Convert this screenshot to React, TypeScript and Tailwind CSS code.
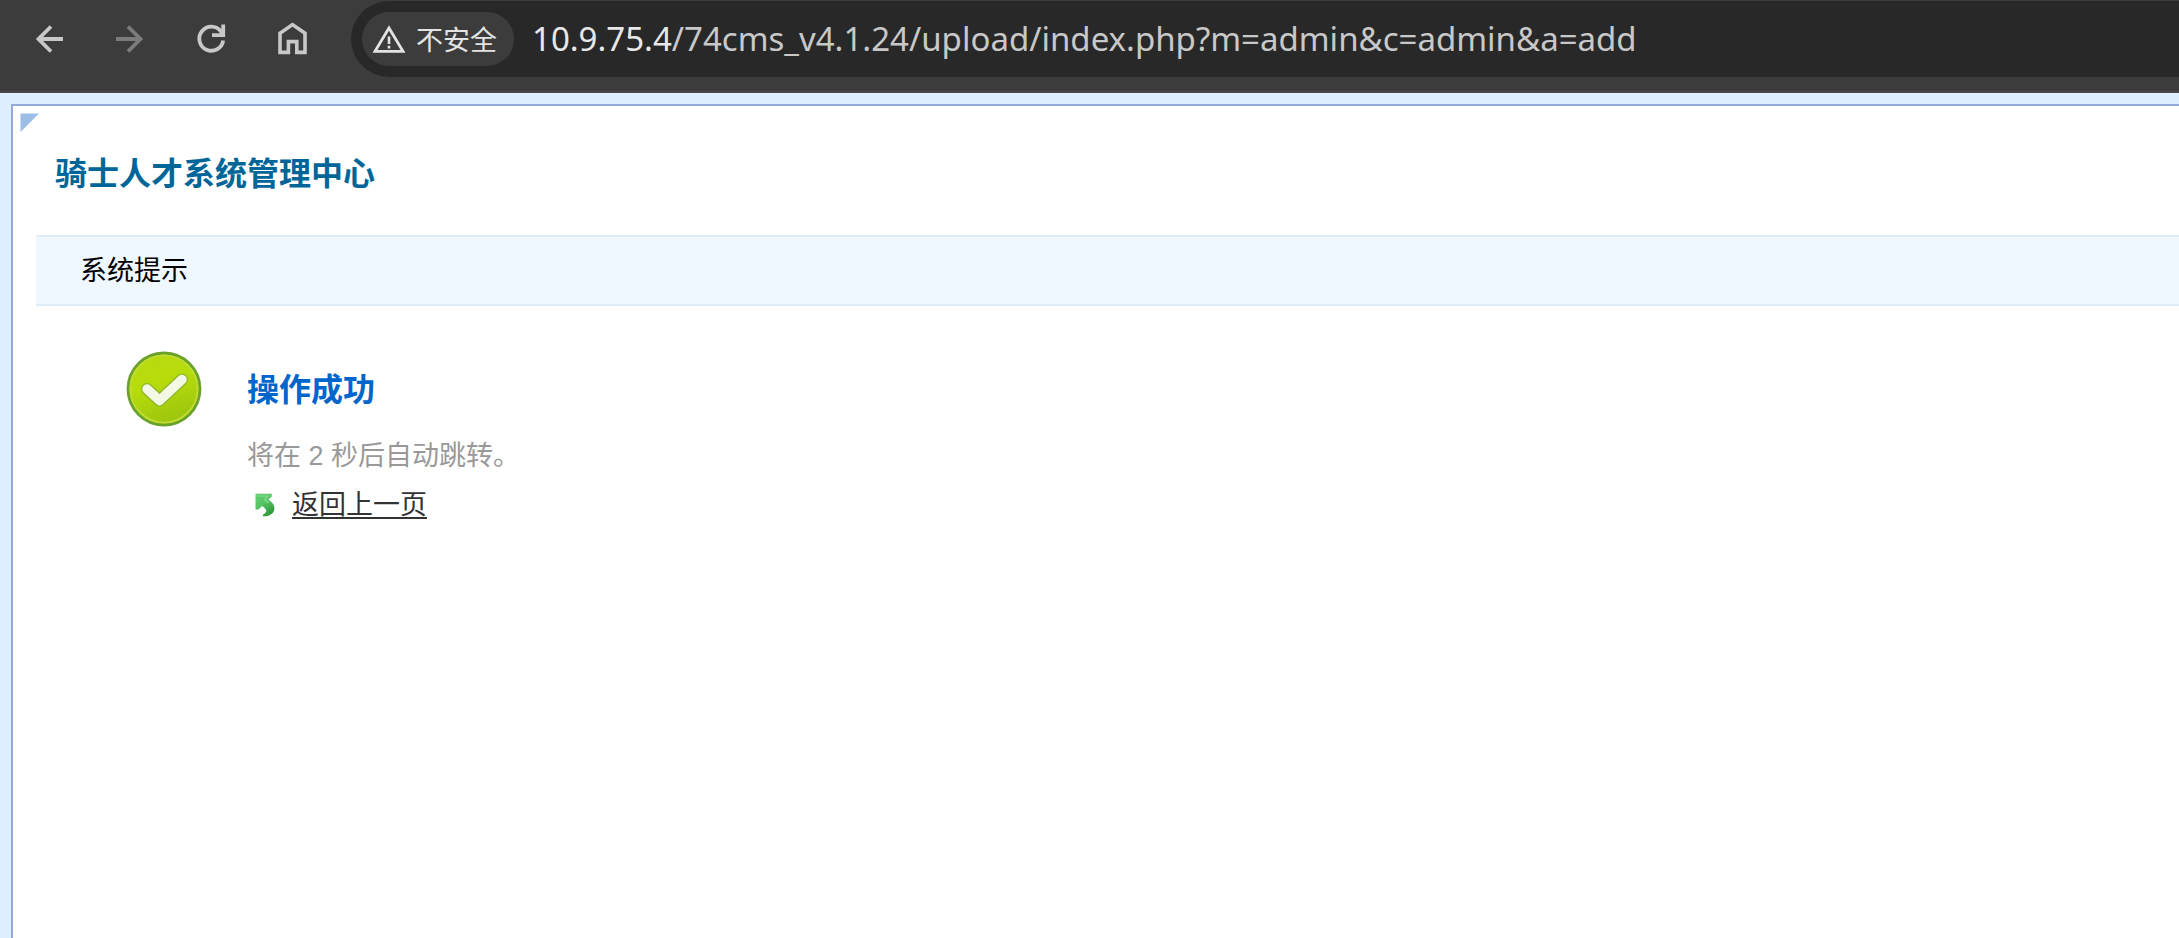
import React, { useState } from "react";

function BackIcon({ flipped = false }: { flipped?: boolean }) {
  return (
    <svg
      width="36"
      height="36"
      viewBox="0 0 36 36"
      fill="none"
      stroke="currentColor"
      strokeWidth="3.8"
      className={flipped ? "rotate-180" : ""}
      aria-hidden="true"
    >
      <path d="M32 18H7.5M20 5.5L7.5 18L20 30.5" />
    </svg>
  );
}

function ReloadIcon() {
  return (
    <svg width="36" height="36" viewBox="0 0 36 36" fill="none" stroke="currentColor" strokeWidth="3.8" aria-hidden="true">
      <path d="M30.2 19.5A12 12 0 1 1 28 10.6L30.5 14" />
      <path d="M30.2 3.5V14.2H19" />
    </svg>
  );
}

function HomeIcon() {
  return (
    <svg width="36" height="36" viewBox="0 0 36 36" fill="none" stroke="currentColor" strokeWidth="3.6" aria-hidden="true">
      <path d="M6 12.2L18.5 3.6L31 12.2V31.4H22.8V20.6H14.4V31.4H6Z" />
    </svg>
  );
}

function WarningIcon() {
  return (
    <svg width="34" height="30" viewBox="0 0 34 30" fill="none" stroke="currentColor" aria-hidden="true">
      <path d="M17 4L31 27.4H3Z" strokeWidth="2.8" />
      <path d="M17 12.5V20M17 21.8V24.4" strokeWidth="2.6" />
    </svg>
  );
}

function SuccessIcon() {
  return (
    <svg width="76" height="76" viewBox="0 0 76 76" className="shrink-0" role="img" aria-label="成功">
      <defs>
        <linearGradient id="disc" x1="0" y1="0" x2="0.35" y2="1">
          <stop offset="0" stopColor="#b9da0e" />
          <stop offset="0.5" stopColor="#b7dc0c" />
          <stop offset="1" stopColor="#9ec70e" />
        </linearGradient>
      </defs>
      <circle cx="38" cy="38" r="36" fill="url(#disc)" stroke="#69a12a" strokeWidth="2.8" />
      <circle cx="38" cy="38" r="33.6" fill="none" stroke="#bfdc34" strokeWidth="1.8" />
      <path d="M21 38L33.5 49.5L56 28.5" fill="none" stroke="#8fb62a" strokeWidth="12" strokeLinecap="round" strokeLinejoin="round" />
      <path d="M21 38L33.5 49.5L56 28.5" fill="none" stroke="#f4f9e6" strokeWidth="9.4" strokeLinecap="round" strokeLinejoin="round" />
    </svg>
  );
}

function ReturnIcon() {
  return (
    <svg width="20" height="24" viewBox="0 0 20 24" aria-hidden="true">
      <defs>
        <linearGradient id="leaf" x1="0" y1="0" x2="0.6" y2="1">
          <stop offset="0" stopColor="#62d070" />
          <stop offset="0.5" stopColor="#58c466" />
          <stop offset="1" stopColor="#2f9a3a" />
        </linearGradient>
      </defs>
      <path
        d="M0.5 0.8H16.8V3.6L13.4 6.6C17.2 9 19.4 11.8 19.4 15.4C19.4 20 15 23.4 8 23.2V21.4C11.2 20 11.8 18.2 10.8 16.4C10 15.2 8.8 14.2 7.2 13L3.4 16.6H0.5Z"
        fill="url(#leaf)"
      />
      <path d="M2.5 3H13L9.8 6.4L13.6 9.8" fill="none" stroke="#86dd90" strokeWidth="1.2" />
    </svg>
  );
}

function Toolbar() {
  const [path, setPath] = useState("/74cms_v4.1.24/upload/index.php?m=admin&c=admin&a=add");
  return (
    <header className="flex items-start border-b-2 border-[#474745] bg-[#3c3c3c] pt-px pb-3.5 text-[#c8c8c8]">
      <nav className="flex gap-[45px] py-5 pr-[41px] pl-[31px]" aria-label="导航">
        <button type="button" aria-label="后退"><BackIcon /></button>
        <button type="button" aria-label="前进" className="text-[#7c7c7c]"><BackIcon flipped /></button>
        <button type="button" aria-label="刷新"><ReloadIcon /></button>
        <button type="button" aria-label="主页"><HomeIcon /></button>
      </nav>
      <div className="flex h-[76px] min-w-0 flex-1 items-center rounded-l-full bg-[#282828] pl-[11px]">
        <button type="button" className="flex h-[54px] shrink-0 items-center gap-2.5 rounded-full bg-[#3c3c3c] pr-[17px] pl-2.5 text-[27px] leading-8 text-[#e3e3e3]">
          <WarningIcon />
          <span className="pt-1">不安全</span>
        </button>
        <label htmlFor="address" className="pl-[18px] font-['Noto_Sans'] text-[33px] leading-10 text-[#e8e8e8]">
          10.9.75.4
        </label>
        <input
          id="address"
          value={path}
          onChange={(e) => setPath(e.target.value)}
          className="min-w-0 flex-1 bg-transparent font-['Noto_Sans'] text-[33px] leading-10 text-[#c8c8c8] outline-none"
        />
      </div>
    </header>
  );
}

export default function App() {
  return (
    <div className="flex min-h-screen flex-col bg-[#dfefff] font-['Liberation_Sans','Noto_Sans_CJK_SC',sans-serif] text-[27px] leading-9 text-black">
      <Toolbar />
      <main className="mt-[11px] ml-[11px] flex-1 border-t-2 border-l-2 border-[#95a9dc] bg-white">
        <svg width="20" height="20" viewBox="0 0 20 20" className="mt-[7px] ml-[7px] block" aria-hidden="true">
          <path d="M0.5 0.5H19L0.5 19Z" fill="#9bbde6" />
        </svg>
        <h1 className="pt-[21px] pb-[41px] pl-[42px] text-[32px] leading-10 font-bold text-[#006699]">骑士人才系统管理中心</h1>
        <h2 className="ml-[23px] border-y-2 border-[#e0edf6] bg-[#eff7ff] pt-4 pb-[15px] pl-11">系统提示</h2>
        <section className="flex gap-[45px] pt-[45px] pl-[113px]">
          <SuccessIcon />
          <div className="pt-[19px]">
            <h3 className="text-[32px] leading-10 font-bold text-[#0066cc]">操作成功</h3>
            <p className="pt-7 text-[#999999]">将在 2 秒后自动跳转。</p>
            <a href="#back" className="flex items-center gap-[17px] pt-[13px] pl-2 text-[#333333]">
              <ReturnIcon />
              <span className="underline decoration-2 underline-offset-3">返回上一页</span>
            </a>
          </div>
        </section>
      </main>
    </div>
  );
}
